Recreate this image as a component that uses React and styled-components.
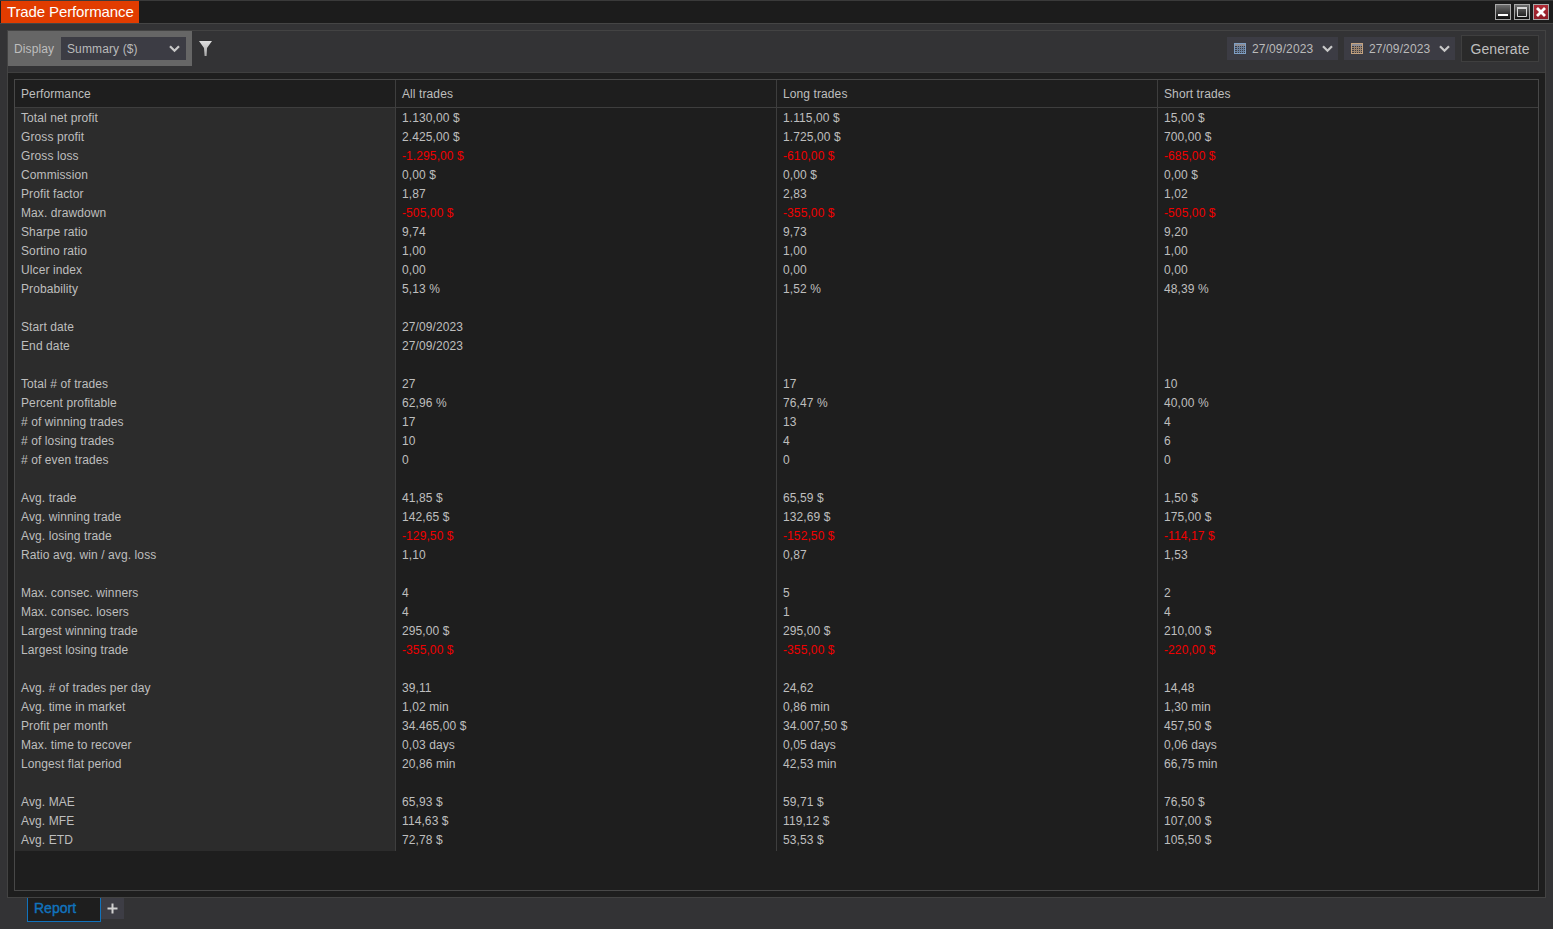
import React from "react";
import styled, { createGlobalStyle } from "styled-components";

const GlobalStyle = createGlobalStyle`
  html, body {
    margin: 0;
    padding: 0;
    background: #333335;
    font-family: "Liberation Sans", Arial, sans-serif;
  }
`;

const rows = [
  ["Total net profit", "1.130,00 $", "1.115,00 $", "15,00 $"],
  ["Gross profit", "2.425,00 $", "1.725,00 $", "700,00 $"],
  ["Gross loss", "-1.295,00 $", "-610,00 $", "-685,00 $"],
  ["Commission", "0,00 $", "0,00 $", "0,00 $"],
  ["Profit factor", "1,87", "2,83", "1,02"],
  ["Max. drawdown", "-505,00 $", "-355,00 $", "-505,00 $"],
  ["Sharpe ratio", "9,74", "9,73", "9,20"],
  ["Sortino ratio", "1,00", "1,00", "1,00"],
  ["Ulcer index", "0,00", "0,00", "0,00"],
  ["Probability", "5,13 %", "1,52 %", "48,39 %"],
  ["", "", "", ""],
  ["Start date", "27/09/2023", "", ""],
  ["End date", "27/09/2023", "", ""],
  ["", "", "", ""],
  ["Total # of trades", "27", "17", "10"],
  ["Percent profitable", "62,96 %", "76,47 %", "40,00 %"],
  ["# of winning trades", "17", "13", "4"],
  ["# of losing trades", "10", "4", "6"],
  ["# of even trades", "0", "0", "0"],
  ["", "", "", ""],
  ["Avg. trade", "41,85 $", "65,59 $", "1,50 $"],
  ["Avg. winning trade", "142,65 $", "132,69 $", "175,00 $"],
  ["Avg. losing trade", "-129,50 $", "-152,50 $", "-114,17 $"],
  ["Ratio avg. win / avg. loss", "1,10", "0,87", "1,53"],
  ["", "", "", ""],
  ["Max. consec. winners", "4", "5", "2"],
  ["Max. consec. losers", "4", "1", "4"],
  ["Largest winning trade", "295,00 $", "295,00 $", "210,00 $"],
  ["Largest losing trade", "-355,00 $", "-355,00 $", "-220,00 $"],
  ["", "", "", ""],
  ["Avg. # of trades per day", "39,11", "24,62", "14,48"],
  ["Avg. time in market", "1,02 min", "0,86 min", "1,30 min"],
  ["Profit per month", "34.465,00 $", "34.007,50 $", "457,50 $"],
  ["Max. time to recover", "0,03 days", "0,05 days", "0,06 days"],
  ["Longest flat period", "20,86 min", "42,53 min", "66,75 min"],
  ["", "", "", ""],
  ["Avg. MAE", "65,93 $", "59,71 $", "76,50 $"],
  ["Avg. MFE", "114,63 $", "119,12 $", "107,00 $"],
  ["Avg. ETD", "72,78 $", "53,53 $", "105,50 $"],
];

const Page = styled.div`
  width: 1553px;
  height: 929px;
  display: flex;
  flex-direction: column;
  background: #333335;
  overflow: hidden;
`;

const TitleBar = styled.div`
  height: 22px;
  flex: none;
  display: flex;
  justify-content: space-between;
  align-items: flex-start;
  background: #1c1c1c;
  border-top: 1px solid #3a3a3a;
  border-bottom: 1px solid #454545;
  padding-left: 1px;
`;

const TitleTab = styled.div`
  width: 138px;
  height: 22px;
  box-sizing: border-box;
  padding-left: 6px;
  background: #e13c00;
  color: #fff;
  font-size: 15px;
  letter-spacing: -0.12px;
  line-height: 22px;
`;

const WindowButtons = styled.div`
  display: flex;
  gap: 3px;
  padding: 3px 4px 0 0;
`;

const WinButton = styled.div`
  width: 16px;
  height: 16px;
  box-sizing: border-box;
  border: 1px solid #a8a8a8;
  background: ${(p) =>
    p.$close ? "linear-gradient(#b02a35, #8e1c26)" : "linear-gradient(#6e6e6e, #0e0e0e)"};
  svg {
    display: block;
  }
`;

const Body = styled.div`
  flex: 1;
  display: flex;
  flex-direction: column;
  padding: 6px 7px 0 7px;
  min-height: 0;
`;

const Panel = styled.div`
  height: 868px;
  flex: none;
  box-sizing: border-box;
  display: flex;
  flex-direction: column;
  border: 1px solid #434343;
  background: #1e1e1e;
`;

const Toolbar = styled.div`
  height: 42px;
  flex: none;
  box-sizing: border-box;
  display: flex;
  align-items: flex-start;
  justify-content: space-between;
  background: #333335;
  border-bottom: 1px solid #3f3f3f;
  padding-right: 6px;
`;

const ToolGroup = styled.div`
  display: flex;
  align-items: flex-start;
`;

const DisplayBox = styled.div`
  width: 184px;
  height: 35px;
  box-sizing: border-box;
  display: flex;
  align-items: center;
  justify-content: space-between;
  padding: 0 6px;
  background: #666666;
  color: #bebebe;
  font-size: 12px;
  letter-spacing: 0.12px;
`;

const Select = styled.div`
  display: flex;
  align-items: center;
  justify-content: space-between;
  box-sizing: border-box;
  width: ${(p) => p.$width}px;
  height: 23px;
  padding: 0 6px;
  background: #3c3c44;
  color: #bababa;
  font-size: 12px;
  letter-spacing: 0.12px;
`;

const DateSelect = styled(Select)`
  margin-top: 6px;
  margin-right: 6px;
  padding: 0 5px 0 7px;
  gap: 6px;
  justify-content: flex-start;
  svg:last-child {
    margin-left: auto;
  }
`;

const FilterButton = styled.div`
  margin: 10px 0 0 7px;
  svg {
    display: block;
  }
`;

const GenerateButton = styled.div`
  width: 78px;
  height: 27px;
  margin-top: 4px;
  box-sizing: border-box;
  border: 1px solid #3f3f3f;
  background: #2a2a2a;
  color: #bebebe;
  font-size: 14px;
  letter-spacing: 0.1px;
  line-height: 26px;
  text-align: center;
`;

const GridWrap = styled.div`
  flex: 1;
  margin: 6px;
  border: 1px solid #484848;
  min-height: 0;
  font-size: 12px;
  letter-spacing: 0.1px;
`;

const Row = styled.div`
  display: grid;
  grid-template-columns: 381px 381px 381px 1fr;
  height: ${(p) => (p.$head ? "28px" : "19px")};
  line-height: ${(p) => (p.$head ? "28px" : "21px")};
  box-sizing: border-box;
  ${(p) => p.$head && "border-bottom: 1px solid #3e3e3e;"}
`;

const Cell = styled.div`
  box-sizing: border-box;
  padding-left: 6px;
  border-right: ${(p) => (p.$last ? "none" : "1px solid #3e3e3e")};
  color: ${(p) => (p.$neg ? "#f00000" : "#bebebe")};
  background: ${(p) => (p.$label ? "#2c2c2c" : "transparent")};
  white-space: nowrap;
`;

const HeadCell = styled(Cell)`
  background: transparent;
`;

const TabStrip = styled.div`
  display: flex;
  align-items: flex-start;
  padding-left: 20px;
`;

const Tab = styled.div`
  width: 74px;
  height: 24px;
  box-sizing: border-box;
  border: 1px solid #1173bd;
  border-top: none;
  padding-left: 6px;
  background: #1e1e1e;
  color: #1173bd;
  font-size: 14px;
  line-height: 21px;
  -webkit-text-stroke: 0.4px #1173bd;
`;

const AddTab = styled.div`
  width: 23px;
  height: 21px;
  display: flex;
  align-items: center;
  justify-content: center;
  background: #3d3d45;
  svg {
    display: block;
  }
`;

const Chevron = () => (
  <svg width="11" height="8" viewBox="0 0 11 8">
    <path d="M1 1.2 L5.5 5.8 L10 1.2" fill="none" stroke="#c8c8c8" strokeWidth="2.2" />
  </svg>
);

const CalendarIcon = ({ color }) => (
  <svg width="12" height="11" viewBox="0 0 12 11">
    <rect x="0.5" y="0.5" width="11" height="10" fill="#3c3c44" stroke={color} />
    <rect x="1" y="1" width="10" height="2" fill="#8d8d95" />
    <path d="M1 4.5h10M1 6.5h10M1 8.5h10M3.5 3v7M5.5 3v7M7.5 3v7M9.5 3v7" stroke={color} strokeWidth="1" opacity="0.7" />
  </svg>
);

const isNeg = (v) => v.startsWith("-");

export default function App() {
  return (
    <Page>
      <GlobalStyle />
      <TitleBar>
        <TitleTab>Trade Performance</TitleTab>
        <WindowButtons>
          <WinButton>
            <svg width="14" height="14" viewBox="0 0 14 14">
              <rect x="2" y="9" width="10" height="2" fill="#fff" />
            </svg>
          </WinButton>
          <WinButton>
            <svg width="14" height="14" viewBox="0 0 14 14">
              <path d="M2.5 3.5h9v8h-9z" fill="none" stroke="#d8d8d8" />
              <rect x="2" y="2" width="10" height="2" fill="#d8d8d8" />
            </svg>
          </WinButton>
          <WinButton $close>
            <svg width="14" height="14" viewBox="0 0 14 14">
              <path d="M3 3 L11 11 M11 3 L3 11" stroke="#fff" strokeWidth="2.8" />
            </svg>
          </WinButton>
        </WindowButtons>
      </TitleBar>
      <Body>
        <Panel>
          <Toolbar>
            <ToolGroup>
              <DisplayBox>
                Display
                <Select $width={125}>
                  Summary ($)
                  <Chevron />
                </Select>
              </DisplayBox>
              <FilterButton>
                <svg width="13" height="15" viewBox="0 0 13 15">
                  <defs>
                    <linearGradient id="funnel" x1="0" y1="0" x2="0" y2="1">
                      <stop offset="0" stopColor="#e0e0e0" />
                      <stop offset="1" stopColor="#a8a8a8" />
                    </linearGradient>
                  </defs>
                  <path d="M0 0 H13 L8 7 L7.6 15 H5.6 L5 7 Z" fill="url(#funnel)" />
                </svg>
              </FilterButton>
            </ToolGroup>
            <ToolGroup>
              <DateSelect $width={111}>
                <CalendarIcon color="#7f9fc4" />
                27/09/2023
                <Chevron />
              </DateSelect>
              <DateSelect $width={111}>
                <CalendarIcon color="#c4a27f" />
                27/09/2023
                <Chevron />
              </DateSelect>
              <GenerateButton>Generate</GenerateButton>
            </ToolGroup>
          </Toolbar>
          <GridWrap>
            <Row $head>
              <HeadCell>Performance</HeadCell>
              <HeadCell>All trades</HeadCell>
              <HeadCell>Long trades</HeadCell>
              <HeadCell $last>Short trades</HeadCell>
            </Row>
            {rows.map((r, i) => (
              <Row key={i}>
                <Cell $label>{r[0]}</Cell>
                <Cell $neg={isNeg(r[1])}>{r[1]}</Cell>
                <Cell $neg={isNeg(r[2])}>{r[2]}</Cell>
                <Cell $neg={isNeg(r[3])} $last>
                  {r[3]}
                </Cell>
              </Row>
            ))}
          </GridWrap>
        </Panel>
        <TabStrip>
          <Tab>Report</Tab>
          <AddTab>
            <svg width="11" height="11" viewBox="0 0 11 11">
              <path d="M5.5 0.5v10M0.5 5.5h10" stroke="#d0d0d0" strokeWidth="2" />
            </svg>
          </AddTab>
        </TabStrip>
      </Body>
    </Page>
  );
}
